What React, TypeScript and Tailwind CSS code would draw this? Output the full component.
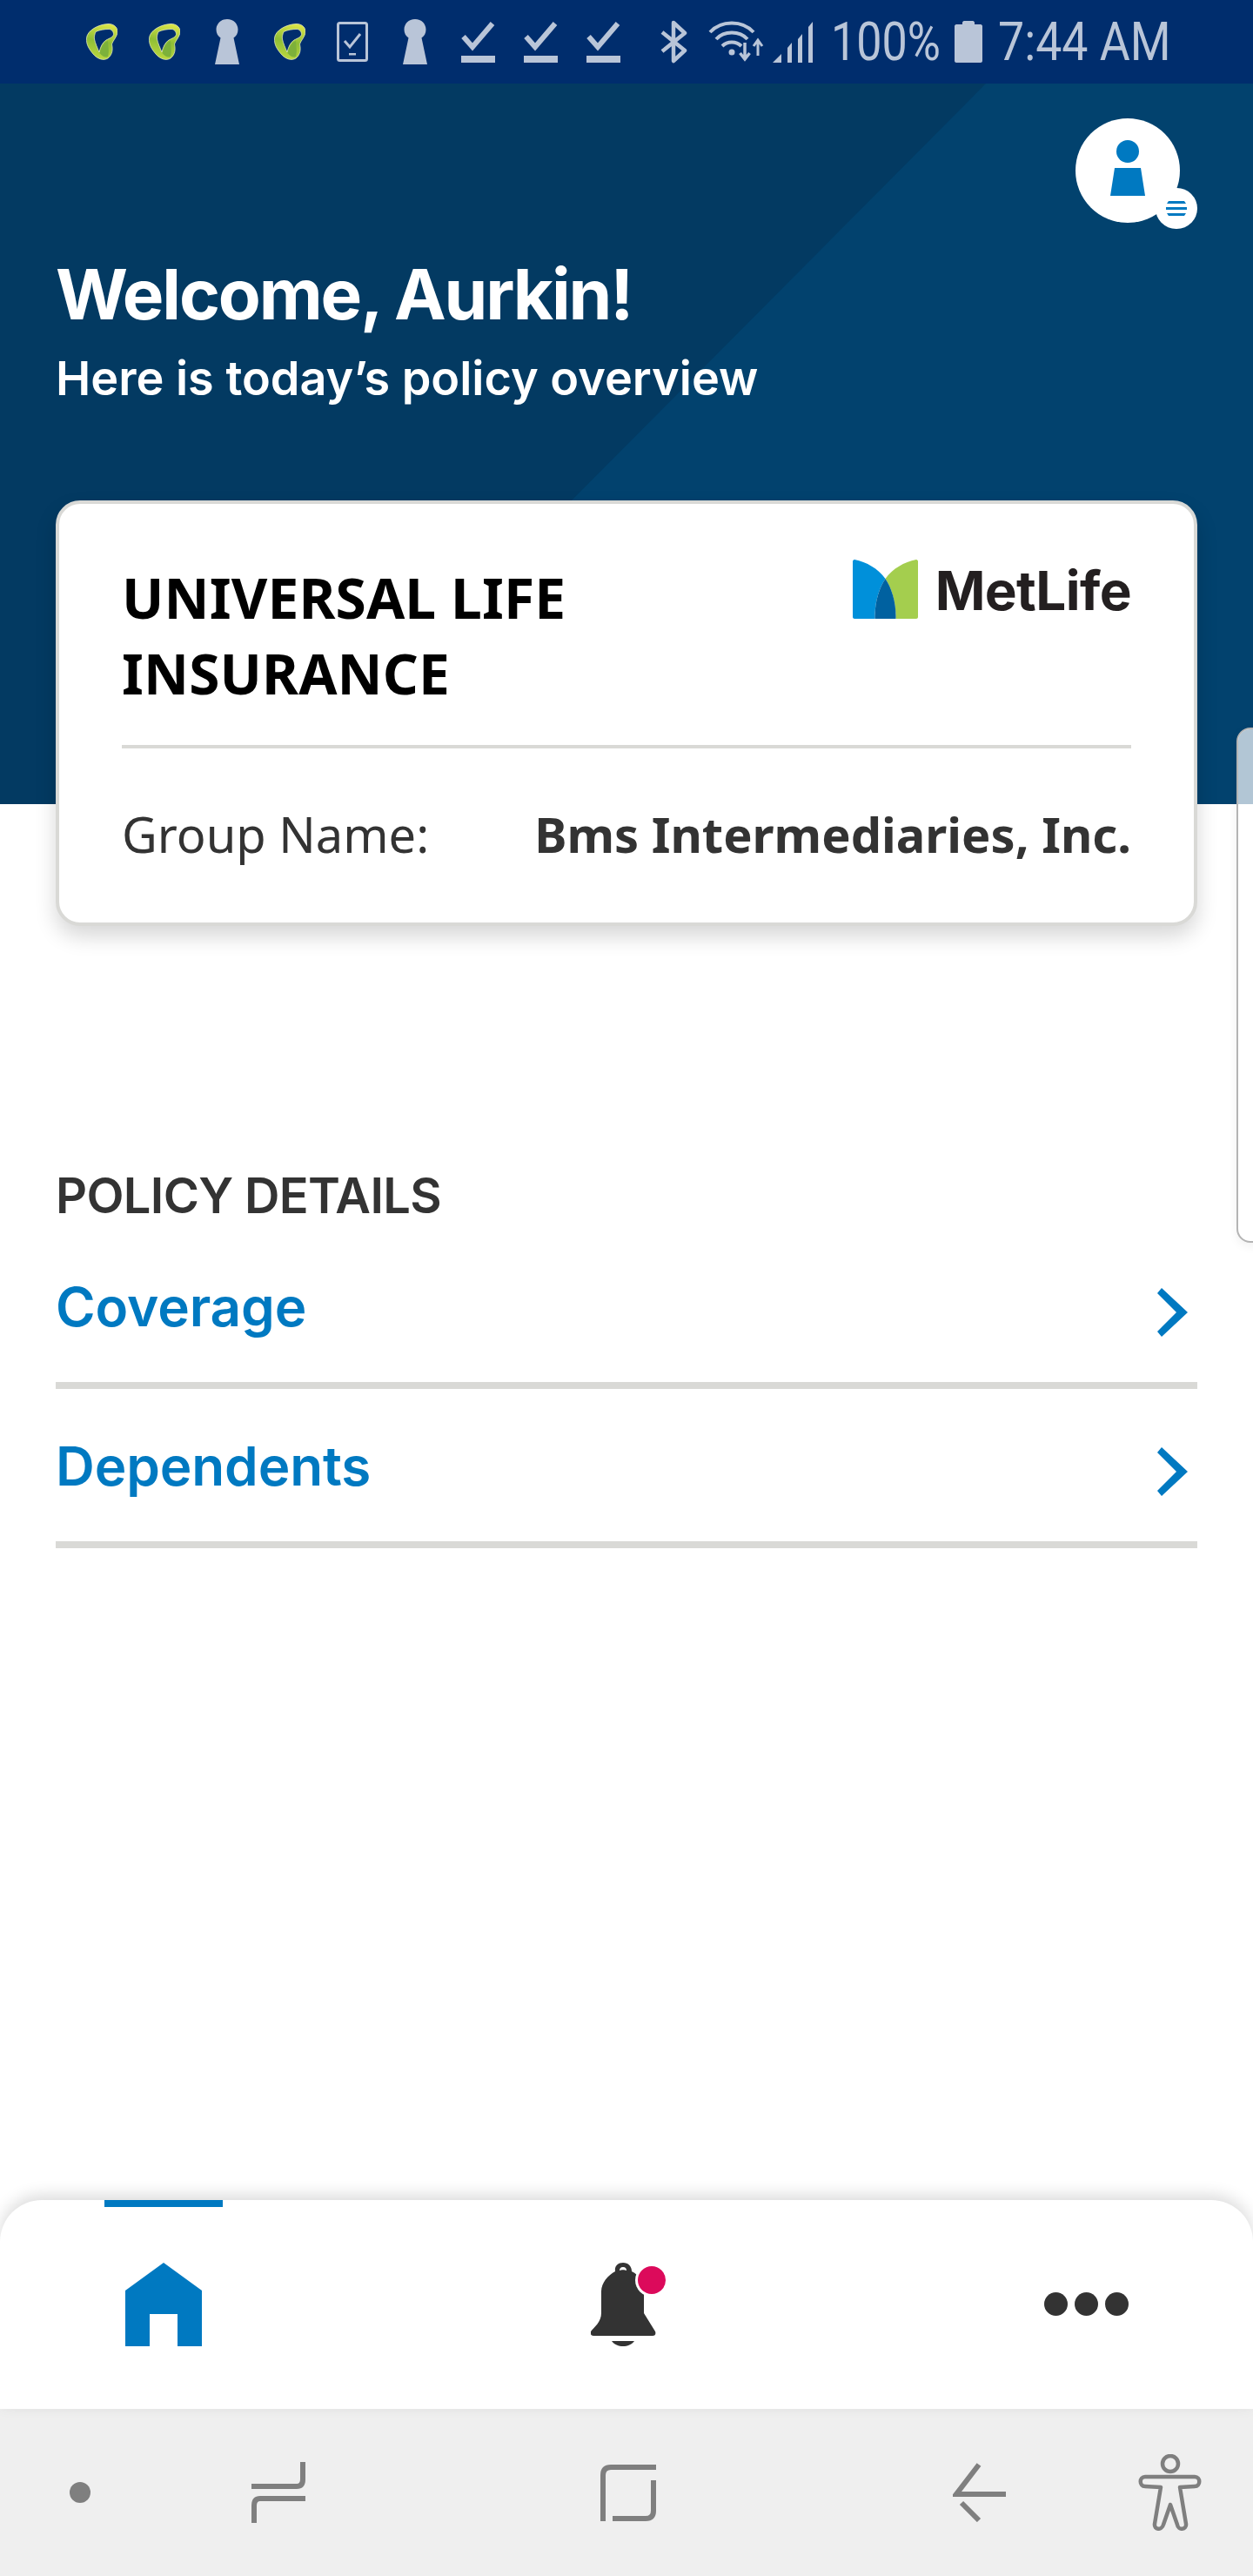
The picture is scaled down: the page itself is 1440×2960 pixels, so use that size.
const sans = "font-['Inter','Noto_Sans',sans-serif]";
const noto = "font-['Noto_Sans','Open_Sans',sans-serif]";

/** The green app glyph repeated in the status bar. */
function LeafIcon({ id, className }: { id: string; className: string }) {
  return (
    <svg viewBox="0 0 36 43" className={`h-[43px] w-[36px] shrink-0 ${className}`}>
      <defs>
        <linearGradient id={id} x1="0.6" y1="0" x2="0.4" y2="1">
          <stop offset="0" stopColor="#dbe548" />
          <stop offset="0.5" stopColor="#8fbe36" />
          <stop offset="1" stopColor="#bcd83f" />
        </linearGradient>
      </defs>
      <path
        fillRule="evenodd"
        fill={`url(#${id})`}
        stroke="#eef3c8"
        strokeWidth="0.7"
        d="M25 0.500C31 0 36 4 36 9C36 15 31 19 29.500 24C31 30 30 36 25 40C20 43 13 41 8 35C3 29 0 24 0.500 17C1 8 14 1 25 0.500ZM11 9.500C10 12 9 15 9.500 18C10.500 23 13 28 15 33C16.500 27 18.500 22 23 19C27 17 31 15.500 31.500 12.500C31.500 9 29 6.500 26 6.500C21 6.500 15 7.500 11 9.500Z"
      />
      <path d="M15.500 34C17 27 20 22.500 25 20C25 25 27 32 25 38C22 39.500 19 38 15.500 34Z" fill="#7db13a" />
    </svg>
  );
}

function KeyholeIcon({ className }: { className: string }) {
  return (
    <svg viewBox="0 0 28 52" className={`h-[52px] w-[28px] shrink-0 ${className}`}>
      <path fill="#b9c5d8" d="M14 0C21.500 0 26.500 5.500 26.500 12C26.500 16.500 24.500 19.500 21.500 21.500L28 52H0L6.500 21.500C3.500 19.500 1.500 16.500 1.500 12C1.500 5.500 6.500 0 14 0Z" />
    </svg>
  );
}

function CheckLineIcon({ className }: { className: string }) {
  return (
    <svg viewBox="0 0 39 48" className={`h-[48px] w-[39px] shrink-0 ${className}`}>
      <path d="M2.500 18L13 30L36 3" fill="none" stroke="#b9c5d8" strokeWidth="6" />
      <rect x="0" y="40" width="39" height="8" fill="#b9c5d8" />
    </svg>
  );
}

function StatusBar() {
  return (
    <div className="flex h-[96px] shrink-0 items-center bg-[#002d6d]">
      <LeafIcon id="leaf-a" className="ml-[99px]" />
      <LeafIcon id="leaf-b" className="ml-[36px]" />
      <KeyholeIcon className="ml-[40px]" />
      <LeafIcon id="leaf-c" className="ml-[40px]" />
      <svg viewBox="0 0 36 46" className="ml-[36px] h-[46px] w-[36px] shrink-0" fill="none" stroke="#b9c5d8">
        <rect x="1.500" y="1.500" width="33" height="43" rx="2" strokeWidth="3" />
        <path d="M9 22L15 29L27 14" strokeWidth="3" />
        <rect x="14" y="36" width="8" height="2.500" fill="#b9c5d8" stroke="none" />
      </svg>
      <KeyholeIcon className="ml-[40px]" />
      <CheckLineIcon className="ml-[39px]" />
      <CheckLineIcon className="ml-[33px]" />
      <CheckLineIcon className="ml-[33px]" />
      {/* bluetooth */}
      <svg viewBox="0 0 31 50" className="ml-[46px] h-[50px] w-[31px] shrink-0" fill="none" stroke="#b9c5d8" strokeWidth="4.500">
        <path d="M2 14L28 35L15 47V3L28 15L2 36" strokeLinejoin="round" />
      </svg>
      {/* wifi + up/down arrows */}
      <svg viewBox="0 0 64 48" className="ml-[24px] h-[48px] w-[64px] shrink-0" fill="none" stroke="#b9c5d8">
        <path d="M2 13C15 -1 39 -1 52 13" strokeWidth="4" />
        <path d="M9 21C18 11 36 11 45 21" strokeWidth="4" />
        <path d="M16 29C22 23 32 23 38 29" strokeWidth="4" />
        <circle cx="27" cy="36" r="3.500" fill="#b9c5d8" stroke="none" />
        <path d="M42 25V43M36.500 37L42 44L47.500 37" strokeWidth="3.500" />
        <path d="M57 40V23M52 29L57 22L62 29" strokeWidth="3" />
      </svg>
      {/* signal */}
      <svg viewBox="0 0 46 47" className="ml-[10px] h-[47px] w-[46px] shrink-0" fill="#b9c5d8">
        <path d="M0 47L10 37V47Z" />
        <path d="M17 47V30L22 24V47Z" />
        <path d="M29 47V20L34 14V47Z" />
        <path d="M41 47V6L46 0V47Z" />
      </svg>
      <span className="ml-[21px] w-[123px] shrink-0 origin-left scale-x-[0.84] whitespace-nowrap font-['Roboto',sans-serif] text-[62px] leading-none font-normal text-[#b9c5d8]">
        100%
      </span>
      <svg viewBox="0 0 32 48" className="ml-[19px] h-[48px] w-[32px] shrink-0" fill="#b9c5d8">
        <path d="M2 4H9V2C9 1 10 0 11 0H21C22 0 23 1 23 2V4H30C31 4 32 5 32 6V46C32 47 31 48 30 48H2C1 48 0 47 0 46V6C0 5 1 4 2 4Z" />
      </svg>
      <span className="ml-[18px] w-[193px] shrink-0 origin-left scale-x-[0.865] whitespace-nowrap font-['Roboto',sans-serif] text-[62px] leading-none font-normal text-[#b9c5d8]">
        7:44 AM
      </span>
    </div>
  );
}

function AvatarButton() {
  return (
    <div className="absolute top-[40px] left-[1236px] h-[120px] w-[120px] rounded-full bg-white">
      <svg viewBox="0 0 40 64" className="absolute top-[25px] left-[40px] h-[64px] w-[40px]" fill="#0079c1">
        <circle cx="20" cy="13" r="13" />
        <path d="M5 32H35L40 64H0Z" />
      </svg>
      <div className="absolute top-[80px] left-[92px] flex h-[47px] w-[48px] items-center justify-center rounded-full bg-white">
        <svg viewBox="0 0 24 17" className="h-[17px] w-[24px]" fill="#0079c1">
          <path d="M3 0H21L23 3H1Z" />
          <rect x="0" y="7" width="24" height="3" />
          <path d="M1 14H23L21 17H3Z" />
        </svg>
      </div>
    </div>
  );
}

function MetLifeLogo() {
  return (
    <div className="flex shrink-0 items-start">
      <svg viewBox="0 0 75 68" className="h-[68px] w-[75px] shrink-0">
        <path fill="#0090da" d="M2 0C16 3 29 10 37.500 22C30 33 25 50 25.500 68H2C1 68 0 67 0 66V2C0 1 1 0 2 0Z" />
        <path fill="#a4ce4e" d="M73 0C59 3 46 10 37.500 22C45 33 50 50 49.500 68H73C74 68 75 67 75 66V2C75 1 74 0 73 0Z" />
        <path fill="#0061a0" d="M37.500 22C30 33 25 50 25.500 68H49.500C50 50 45 33 37.500 22Z" />
      </svg>
      <span className={`ml-[20px] -mt-[6px] ${sans} text-[62px] leading-[84px] font-bold tracking-[-0.01em] text-[#231f20]`}>MetLife</span>
    </div>
  );
}

function PolicyCard() {
  return (
    <div className="relative z-10 mx-[64px] -mt-[349px] h-[489px] rounded-[28px] border-[4px] border-[#d9d9d6] bg-white px-[72px] shadow-[0_12px_24px_rgba(0,0,0,0.16)]">
      <div className="flex h-[281px] justify-between border-b-[4px] border-[#d9d9d6] pt-[64px]">
        <h2 className={`${noto} text-[64px] leading-[87px] font-bold tracking-[0.002em] text-black`}>
          UNIVERSAL LIFE
          <br />
          INSURANCE
        </h2>
        <MetLifeLogo />
      </div>
      <div className={`flex items-center justify-between pt-[60px] ${noto} text-[56px] leading-[76px] text-[#333]`}>
        <span className="font-normal">Group Name:</span>
        <span className="font-bold">Bms Intermediaries, Inc.</span>
      </div>
    </div>
  );
}

function DetailRow({ label, className }: { label: string; className: string }) {
  return (
    <div className={`flex h-[183px] items-center justify-between border-b-[8px] border-[#d9d9d6] pr-[11px] ${className}`}>
      <span className={`${sans} mt-[3px] text-[62px] leading-none font-semibold tracking-[-0.002em] text-[#0079c1]`}>{label}</span>
      <svg viewBox="0 0 35 56" className="mt-[14px] h-[56px] w-[35px]" fill="#0079c1">
        <path d="M5 0L35 28L5 56L0 50L22 28L0 6Z" />
      </svg>
    </div>
  );
}

function BottomTabs() {
  return (
    <div className="relative z-10 flex h-[240px] shrink-0 rounded-t-[48px] bg-white pt-[72px] shadow-[0_-6px_18px_rgba(0,0,0,0.14)]">
      <div className="absolute top-0 left-[120px] h-[8px] w-[136px] bg-[#0079c1]" />
      <svg viewBox="0 0 88 96" className="ml-[144px] h-[96px] w-[88px] shrink-0" fill="#0079c1">
        <path d="M44 0L88 32V96H60V59H28V96H0V32Z" />
      </svg>
      <svg viewBox="0 0 86 96" className="ml-[447px] h-[96px] w-[86px] shrink-0">
        <path
          fill="#333"
          d="M37 0C43 0 47 4 47 10C56 14 61 23 61 33V58L74 79C75 82 74 84 71 84H3C0 84 -1 81 0 79C4 74 12 68 12 58V33C12 23 20 14 28 10C27 4 31 0 37 0ZM37 5C34 5 33 7 33 9C35 8 39 8 41 9C41 7 40 5 37 5ZM24 90H50C47 94 42 96 37 96C32 96 27 94 24 90Z"
        />
        <circle cx="70" cy="20" r="19" fill="#fff" />
        <circle cx="70" cy="20" r="16" fill="#dc0a5b" />
      </svg>
      <div className="mt-[34px] ml-[435px] flex h-[27px] gap-[8px]">
        <div className="h-[27px] w-[27px] rounded-full bg-[#333]" />
        <div className="h-[27px] w-[27px] rounded-full bg-[#333]" />
        <div className="h-[27px] w-[27px] rounded-full bg-[#333]" />
      </div>
    </div>
  );
}

function AndroidNav() {
  return (
    <div className="flex h-[192px] shrink-0 items-center bg-[#efefef]">
      <div className="ml-[80px] h-[24px] w-[24px] rounded-full bg-[#7f7f7f]" />
      <svg viewBox="0 0 62 70" className="ml-[185px] h-[70px] w-[62px] shrink-0" fill="none" stroke="#7f7f7f" strokeWidth="6">
        <path d="M59 0V20C59 26 56 28 52 28H0" />
        <path d="M3 70V50C3 44 6 42 10 42H62" />
      </svg>
      <svg viewBox="0 0 64 65" className="ml-[339px] h-[65px] w-[64px] shrink-0" fill="none" stroke="#7f7f7f" strokeWidth="6">
        <path d="M3 65V12C3 6 6 3 12 3H64" />
        <path d="M61 18V53C61 59 58 62 52 62H14" />
      </svg>
      <svg viewBox="0 0 61 68" className="ml-[341px] h-[68px] w-[61px] shrink-0" fill="none" stroke="#7f7f7f" strokeWidth="6">
        <path d="M30 2L4 36H61" />
        <path d="M10 46L30 66" />
      </svg>
      <svg viewBox="0 0 73 88" className="ml-[152px] h-[88px] w-[73px] shrink-0" fill="none" stroke="#7f7f7f" strokeWidth="4.500">
        <circle cx="37" cy="11" r="9" />
        <path d="M8 26H65C72 26 72 37 65 37L48 38L55 80C56 87 46 88 45 81L37 58L29 81C27 88 18 87 19 80L26 38L8 37C1 37 1 26 8 26Z" strokeLinejoin="round" />
      </svg>
    </div>
  );
}

export default function App() {
  return (
    <div className="relative flex h-[2960px] w-[1440px] flex-col overflow-hidden bg-white">
      <StatusBar />

      <header className="relative h-[828px] shrink-0 bg-[#033a62]">
        <svg viewBox="0 0 1440 828" className="absolute inset-0 h-full w-full">
          <path d="M1133 0H1440V828H310Z" fill="#02426e" />
        </svg>
        <AvatarButton />
        <div className="relative pt-[192px] pl-[64px] text-white">
          <h1 className={`${sans} text-[80px] leading-[100px] font-bold tracking-[-0.027em]`}>Welcome, Aurkin!</h1>
          <p className={`${sans} mt-[11px] text-[54px] leading-[72px] font-semibold`}>Here is today’s policy overview</p>
        </div>
      </header>

      <PolicyCard />

      {/* edge of the next card, peeking in from the right */}
      <div className="absolute top-[836px] left-[1421px] h-[592px] w-[40px] rounded-l-[16px] border-2 border-[#b4b4b4] bg-white shadow-[0_4px_12px_rgba(0,0,0,0.06)]">
        <div className="h-[86px] rounded-tl-[14px] bg-[#b2c6d5]" />
      </div>

      <section className="mx-[64px] mt-[280px] flex-1">
        <h3 className={`${sans} text-[56px] leading-[60px] font-semibold tracking-[-0.012em] text-[#333]`}>POLICY DETAILS</h3>
        <DetailRow label="Coverage" className="mt-[9px]" />
        <DetailRow label="Dependents" className="" />
      </section>

      <BottomTabs />
      <AndroidNav />
    </div>
  );
}
